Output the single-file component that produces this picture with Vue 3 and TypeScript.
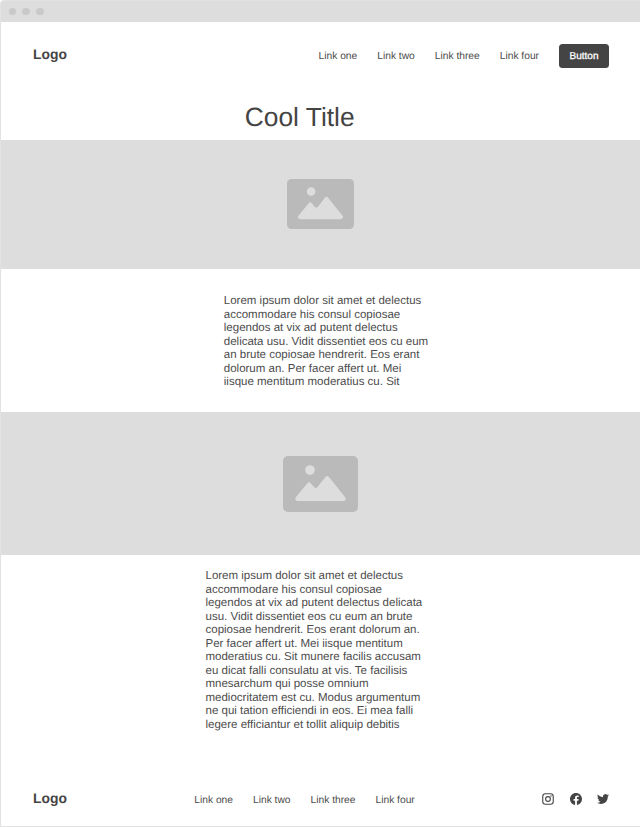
<script setup lang="ts">
const links: string[] = ['Link one', 'Link two', 'Link three', 'Link four']

const intro: string = [
  'Lorem ipsum dolor sit amet et delectus',
  'accommodare his consul copiosae',
  'legendos at vix ad putent delectus',
  'delicata usu. Vidit dissentiet eos cu eum',
  'an brute copiosae hendrerit. Eos erant',
  'dolorum an. Per facer affert ut. Mei',
  'iisque mentitum moderatius cu. Sit',
].join('\n')

const details: string = [
  'Lorem ipsum dolor sit amet et delectus',
  'accommodare his consul copiosae',
  'legendos at vix ad putent delectus delicata',
  'usu. Vidit dissentiet eos cu eum an brute',
  'copiosae hendrerit. Eos erant dolorum an.',
  'Per facer affert ut. Mei iisque mentitum',
  'moderatius cu. Sit munere facilis accusam',
  'eu dicat falli consulatu at vis. Te facilisis',
  'mnesarchum qui posse omnium',
  'mediocritatem est cu. Modus argumentum',
  'ne qui tation efficiendi in eos. Ei mea falli',
  'legere efficiantur et tollit aliquip debitis',
].join('\n')
</script>

<template>
  <div class="window">
    <div class="chrome">
      <span class="dot"></span>
      <span class="dot"></span>
      <span class="dot"></span>
    </div>

    <header class="header">
      <div class="logo">Logo</div>
      <nav class="links">
        <a v-for="link in links" :key="link" class="link">{{ link }}</a>
      </nav>
      <button class="button" type="button">Button</button>
    </header>

    <h1 class="title">Cool Title</h1>

    <section class="banner banner-small">
      <svg class="picture" viewBox="0 0 75 56" preserveAspectRatio="none">
        <rect width="75" height="56" rx="5" fill="#bababa" />
        <circle cx="27" cy="14" r="4.8" fill="#ddd" />
        <path d="M15 45C12.5 45 11.5 42.8 13 41L24.5 27Q26 25.3 27.5 27L31 31Q32.8 33 34.5 31L42.5 21Q44.2 19 46 21L62 41C63.5 42.8 62.5 45 60 45Z" fill="#ddd" />
      </svg>
    </section>

    <p class="copy intro">{{ intro }}</p>

    <section class="banner banner-large">
      <svg class="picture" viewBox="0 0 75 56" preserveAspectRatio="none">
        <rect width="75" height="56" rx="5" fill="#bababa" />
        <circle cx="27" cy="14" r="4.8" fill="#ddd" />
        <path d="M15 45C12.5 45 11.5 42.8 13 41L24.5 27Q26 25.3 27.5 27L31 31Q32.8 33 34.5 31L42.5 21Q44.2 19 46 21L62 41C63.5 42.8 62.5 45 60 45Z" fill="#ddd" />
      </svg>
    </section>

    <p class="copy details">{{ details }}</p>

    <footer class="footer">
      <div class="logo">Logo</div>
      <nav class="links">
        <a v-for="link in links" :key="link" class="link">{{ link }}</a>
      </nav>
      <div class="social">
        <svg class="icon" viewBox="0 0 24 24" fill="none" stroke="#444">
          <rect x="1.5" y="1.5" width="21" height="21" rx="5.5" stroke-width="2.2" />
          <circle cx="12" cy="12" r="4.8" stroke-width="2.2" />
          <circle cx="18" cy="6" r="1.4" fill="#444" stroke="none" />
        </svg>
        <svg class="icon" viewBox="0 0 24 24" fill="#444">
          <path d="M24 12.073c0-6.627-5.373-12-12-12s-12 5.373-12 12c0 5.990 4.388 10.954 10.125 11.854v-8.385H7.078v-3.470h3.047V9.430c0-3.007 1.792-4.669 4.533-4.669 1.312 0 2.686.235 2.686.235v2.953H15.830c-1.491 0-1.956.925-1.956 1.874v2.250h3.328l-.532 3.470h-2.796v8.385C19.612 23.027 24 18.062 24 12.073z" />
        </svg>
        <svg class="icon" viewBox="0 0 24 24" fill="#444">
          <path d="M23.953 4.570a10 10 0 01-2.825.775 4.958 4.958 0 002.163-2.723c-.951.555-2.005.959-3.127 1.184a4.920 4.920 0 00-8.384 4.482C7.690 8.095 4.067 6.130 1.640 3.162a4.822 4.822 0 00-.666 2.475c0 1.710.870 3.213 2.188 4.096a4.904 4.904 0 01-2.228-.616v.060a4.923 4.923 0 003.946 4.827 4.996 4.996 0 01-2.212.085 4.936 4.936 0 004.604 3.417 9.867 9.867 0 01-6.102 2.105c-.390 0-.779-.023-1.170-.067a13.995 13.995 0 007.557 2.209c9.053 0 13.998-7.496 13.998-13.985 0-.210 0-.420-.015-.630A9.935 9.935 0 0024 4.590z" />
        </svg>
      </div>
    </footer>
  </div>
</template>

<style>
body {
  background: #fff;
}
</style>

<style scoped>
.window {
  box-sizing: border-box;
  width: 640px;
  height: 827px;
  display: flex;
  flex-direction: column;
  overflow: hidden;
  border: 1px solid #e2e2e2;
  border-right: 0;
  border-radius: 4px 0 0 0;
  background: #fff;
  color: #444;
  font-family: "Liberation Sans", Arial, sans-serif;
  text-rendering: geometricPrecision;
}
.chrome {
  box-sizing: border-box;
  flex: none;
  height: 21px;
  padding: 0 7.5px;
  display: flex;
  align-items: center;
  gap: 6px;
  background: #ddd;
}
.dot {
  width: 7.8px;
  height: 7.2px;
  border-radius: 50%;
  background: #c9c9c9;
}
.header {
  box-sizing: border-box;
  flex: none;
  height: 68px;
  padding: 0 31px 0 32px;
  display: flex;
  align-items: center;
}
.logo {
  width: 35px;
  padding-bottom: 5px;
  font-size: 13.9px;
  line-height: 16px;
  font-weight: 700;
}
.links {
  display: flex;
  gap: 20px;
}
.header .links {
  margin-left: auto;
  padding-top: 2px;
}
.link {
  color: #4c4c4c;
  font-size: 10.24px;
  line-height: 12px;
  white-space: nowrap;
}
.button {
  width: 50px;
  height: 24px;
  margin-left: 20px;
  padding: 2px 0 0;
  border: 0;
  border-radius: 3.5px;
  background: #444;
  color: #fff;
  font: 10px/12px "Liberation Sans", Arial, sans-serif;
  text-rendering: geometricPrecision;
  -webkit-text-stroke: 0.3px #fff;
}
.title {
  flex: none;
  height: 50px;
  margin: 0;
  padding-left: 243.8px;
  box-sizing: border-box;
  padding-top: 12px;
  font-size: 26.35px;
  line-height: 30px;
  font-weight: 400;
}
.banner {
  flex: none;
  display: flex;
  align-items: center;
  justify-content: center;
  background: #ddd;
}
.banner-small {
  box-sizing: border-box;
  height: 129px;
  padding-bottom: 1px;
}
.banner-large {
  height: 143px;
}
.picture {
  width: 75px;
  height: 56px;
}
.banner-small .picture {
  width: 67px;
  height: 50px;
}
.copy {
  box-sizing: border-box;
  flex: none;
  margin: 0;
  color: #4c4c4c;
  font-size: 11.5px;
  line-height: 13.5px;
  white-space: pre;
}
.intro {
  height: 143px;
  padding: 26px 0 0 222.8px;
}
.details {
  height: 217px;
  padding: 15px 0 0 204.5px;
}
.footer {
  box-sizing: border-box;
  flex: 1;
  padding: 0 31px 0 32px;
  display: flex;
  align-items: center;
}
.footer .logo {
  padding-bottom: 3px;
}
.footer .links {
  margin-left: 126.3px;
  padding-top: 3px;
}
.social {
  margin-left: auto;
  display: flex;
  gap: 15.3px;
}
.icon {
  display: block;
  width: 12px;
  height: 12px;
}
</style>
